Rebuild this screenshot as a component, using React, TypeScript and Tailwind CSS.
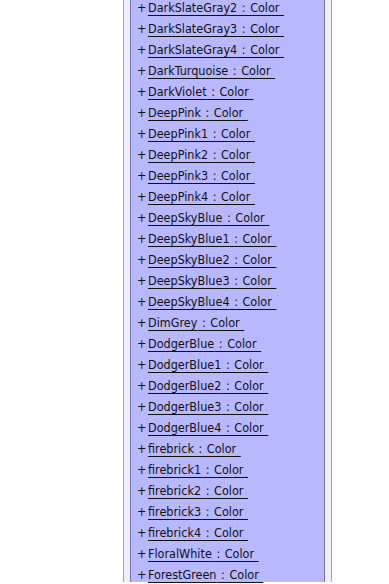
const names = [
  'DarkSlateGray2',
  'DarkSlateGray3',
  'DarkSlateGray4',
  'DarkTurquoise',
  'DarkViolet',
  'DeepPink',
  'DeepPink1',
  'DeepPink2',
  'DeepPink3',
  'DeepPink4',
  'DeepSkyBlue',
  'DeepSkyBlue1',
  'DeepSkyBlue2',
  'DeepSkyBlue3',
  'DeepSkyBlue4',
  'DimGrey',
  'DodgerBlue',
  'DodgerBlue1',
  'DodgerBlue2',
  'DodgerBlue3',
  'DodgerBlue4',
  'firebrick',
  'firebrick1',
  'firebrick2',
  'firebrick3',
  'firebrick4',
  'FloralWhite',
  'ForestGreen',
]

export default function App() {
  return (
    <div className="h-[584px] overflow-hidden bg-white font-['DejaVu_Sans_Condensed','DejaVu_Sans',sans-serif]">
      <div className="ml-[123px] w-[209px] h-full border-x border-[#a4a4b4] bg-[#eeeefc] px-[6px]">
        <div className="h-full border-x border-[#7474a4] bg-[#b8b8ff]">
          <ul className="-mt-[2px] pl-[5px]">
            {names.map(n => (
              <li key={n} className="flex items-center h-[21px] text-[12.5px] text-[#111]">
                <span className="w-[12px] pl-[1px]">+</span>
                <span className="underline underline-offset-[3px] whitespace-pre [word-spacing:1px]">{n} : Color </span>
              </li>
            ))}
          </ul>
        </div>
      </div>
    </div>
  )
}
